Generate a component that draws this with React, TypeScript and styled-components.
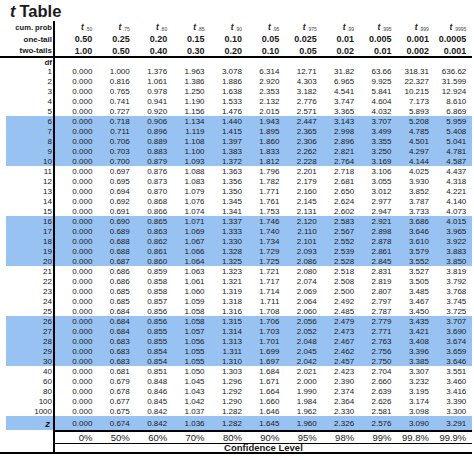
import React from 'react';
import styled, { createGlobalStyle } from 'styled-components';

const BLUE = '#98c2f2';
const INK = '#1a1a1a';

const GlobalStyle = createGlobalStyle`
  html, body { margin: 0; padding: 0; background: #fff; }
  body { font-family: 'Liberation Sans', Arial, sans-serif; color: ${INK}; }
`;

const Page = styled.div`
  width: 474px;
  height: 460px;
  overflow: hidden;
`;

const Title = styled.h1`
  margin: 0;
  height: 21px;
  padding-left: 10px;
  font-size: 16.5px;
  line-height: 22px;
  font-weight: 700;
  i { margin-right: 4px; }
`;

const Row = styled.div<{ $h: number; $band?: boolean; $rule?: number }>`
  display: grid;
  grid-template-columns: 55px repeat(10, 37.4px) 43px;
  width: 472px;
  height: ${(p) => p.$h}px;
  background: ${(p) => (p.$band ? `linear-gradient(to right, transparent 6px, ${BLUE} 6px)` : 'transparent')};
  border-bottom: ${(p) => (p.$rule ? `${p.$rule}px solid #000` : 'none')};
`;

const Label = styled.div<{ $size?: number; $bold?: boolean }>`
  display: flex;
  align-items: center;
  justify-content: flex-end;
  padding-right: 1px;
  border-right: 2px solid #000;
  font-size: ${(p) => p.$size ?? 8}px;
  font-weight: ${(p) => (p.$bold ? 700 : 400)};
  white-space: nowrap;
  i { font-weight: 700; font-size: 9.5px; margin-right: 2px; }
`;

const Cell = styled.div<{ $size?: number; $bold?: boolean; $top?: number; $bottom?: number }>`
  display: flex;
  align-items: center;
  justify-content: flex-end;
  box-sizing: border-box;
  font-size: ${(p) => p.$size ?? 8}px;
  font-weight: ${(p) => (p.$bold ? 700 : 400)};
  white-space: nowrap;
  border-top: ${(p) => (p.$top ? `${p.$top}px solid #000` : 'none')};
  border-bottom: ${(p) => (p.$bottom ? `${p.$bottom}px solid #000` : 'none')};
  &:last-child { padding-right: 5.6px; }
`;

const TMark = styled.span`
  font-weight: 700;
  font-style: italic;
  font-size: 8.5px;
  sub {
    font-size: 5px;
    font-style: normal;
    font-weight: 400;
    color: #444;
    margin-left: 1.5px;
    vertical-align: -1px;
  }
`;

const Spanning = styled.div`
  grid-column: 2 / -1;
  display: flex;
  align-items: center;
  justify-content: center;
  font-size: 9.5px;
  font-weight: 700;
`;

const subs = ['.50', '.75', '.80', '.85', '.90', '.95', '.975', '.99', '.995', '.999', '.9995'];
const oneTail = ['0.50', '0.25', '0.20', '0.15', '0.10', '0.05', '0.025', '0.01', '0.005', '0.001', '0.0005'];
const twoTails = ['1.00', '0.50', '0.40', '0.30', '0.20', '0.10', '0.05', '0.02', '0.01', '0.002', '0.001'];
const percents = ['0%', '50%', '60%', '70%', '80%', '90%', '95%', '98%', '99%', '99.8%', '99.9%'];

const rows: [string, string][] = [
  ['1', '0.000 1.000 1.376 1.963 3.078 6.314 12.71 31.82 63.66 318.31 636.62'],
  ['2', '0.000 0.816 1.061 1.386 1.886 2.920 4.303 6.965 9.925 22.327 31.599'],
  ['3', '0.000 0.765 0.978 1.250 1.638 2.353 3.182 4.541 5.841 10.215 12.924'],
  ['4', '0.000 0.741 0.941 1.190 1.533 2.132 2.776 3.747 4.604 7.173 8.610'],
  ['5', '0.000 0.727 0.920 1.156 1.476 2.015 2.571 3.365 4.032 5.893 6.869'],
  ['6', '0.000 0.718 0.906 1.134 1.440 1.943 2.447 3.143 3.707 5.208 5.959'],
  ['7', '0.000 0.711 0.896 1.119 1.415 1.895 2.365 2.998 3.499 4.785 5.408'],
  ['8', '0.000 0.706 0.889 1.108 1.397 1.860 2.306 2.896 3.355 4.501 5.041'],
  ['9', '0.000 0.703 0.883 1.100 1.383 1.833 2.262 2.821 3.250 4.297 4.781'],
  ['10', '0.000 0.700 0.879 1.093 1.372 1.812 2.228 2.764 3.169 4.144 4.587'],
  ['11', '0.000 0.697 0.876 1.088 1.363 1.796 2.201 2.718 3.106 4.025 4.437'],
  ['12', '0.000 0.695 0.873 1.083 1.356 1.782 2.179 2.681 3.055 3.930 4.318'],
  ['13', '0.000 0.694 0.870 1.079 1.350 1.771 2.160 2.650 3.012 3.852 4.221'],
  ['14', '0.000 0.692 0.868 1.076 1.345 1.761 2.145 2.624 2.977 3.787 4.140'],
  ['15', '0.000 0.691 0.866 1.074 1.341 1.753 2.131 2.602 2.947 3.733 4.073'],
  ['16', '0.000 0.690 0.865 1.071 1.337 1.746 2.120 2.583 2.921 3.686 4.015'],
  ['17', '0.000 0.689 0.863 1.069 1.333 1.740 2.110 2.567 2.898 3.646 3.965'],
  ['18', '0.000 0.688 0.862 1.067 1.330 1.734 2.101 2.552 2.878 3.610 3.922'],
  ['19', '0.000 0.688 0.861 1.066 1.328 1.729 2.093 2.539 2.861 3.579 3.883'],
  ['20', '0.000 0.687 0.860 1.064 1.325 1.725 2.086 2.528 2.845 3.552 3.850'],
  ['21', '0.000 0.686 0.859 1.063 1.323 1.721 2.080 2.518 2.831 3.527 3.819'],
  ['22', '0.000 0.686 0.858 1.061 1.321 1.717 2.074 2.508 2.819 3.505 3.792'],
  ['23', '0.000 0.685 0.858 1.060 1.319 1.714 2.069 2.500 2.807 3.485 3.768'],
  ['24', '0.000 0.685 0.857 1.059 1.318 1.711 2.064 2.492 2.797 3.467 3.745'],
  ['25', '0.000 0.684 0.856 1.058 1.316 1.708 2.060 2.485 2.787 3.450 3.725'],
  ['26', '0.000 0.684 0.856 1.058 1.315 1.706 2.056 2.479 2.779 3.435 3.707'],
  ['27', '0.000 0.684 0.855 1.057 1.314 1.703 2.052 2.473 2.771 3.421 3.690'],
  ['28', '0.000 0.683 0.855 1.056 1.313 1.701 2.048 2.467 2.763 3.408 3.674'],
  ['29', '0.000 0.683 0.854 1.055 1.311 1.699 2.045 2.462 2.756 3.396 3.659'],
  ['30', '0.000 0.683 0.854 1.055 1.310 1.697 2.042 2.457 2.750 3.385 3.646'],
  ['40', '0.000 0.681 0.851 1.050 1.303 1.684 2.021 2.423 2.704 3.307 3.551'],
  ['60', '0.000 0.679 0.848 1.045 1.296 1.671 2.000 2.390 2.660 3.232 3.460'],
  ['80', '0.000 0.678 0.846 1.043 1.292 1.664 1.990 2.374 2.639 3.195 3.416'],
  ['100', '0.000 0.677 0.845 1.042 1.290 1.660 1.984 2.364 2.626 3.174 3.390'],
  ['1000', '0.000 0.675 0.842 1.037 1.282 1.646 1.962 2.330 2.581 3.098 3.300'],
];
const zRow = '0.000 0.674 0.842 1.036 1.282 1.645 1.960 2.326 2.576 3.090 3.291';

// every second block of five df rows is shaded
const banded = (df: string) => {
  const n = Number(df);
  return n <= 30 && Math.floor((n - 1) / 5) % 2 === 1;
};

export default function App() {
  return (
    <Page>
      <GlobalStyle />
      <Title>
        <i>t</i>Table
      </Title>

      <Row $h={12}>
        <Label $size={7.6} $bold>cum. prob</Label>
        {subs.map((s) => (
          <Cell key={s}>
            <TMark>
              t<sub>{s}</sub>
            </TMark>
          </Cell>
        ))}
      </Row>
      <Row $h={12}>
        <Label $bold>one-tail</Label>
        {oneTail.map((v, i) => (
          <Cell key={i} $size={9} $bold>{v}</Cell>
        ))}
      </Row>
      <Row $h={11} $rule={2}>
        <Label $bold>two-tails</Label>
        {twoTails.map((v, i) => (
          <Cell key={i} $size={9} $bold>{v}</Cell>
        ))}
      </Row>
      <Row $h={8}>
        <Label $bold>df</Label>
      </Row>

      {rows.map(([df, vals]) => (
        <Row key={df} $h={10} $band={banded(df)}>
          <Label>{df}</Label>
          {vals.split(' ').map((v, i) => (
            <Cell key={i}>{v}</Cell>
          ))}
        </Row>
      ))}

      <Row $h={14} $band>
        <Label>
          <i>z</i>
        </Label>
        {zRow.split(' ').map((v, i) => (
          <Cell key={i}>{v}</Cell>
        ))}
      </Row>
      <Row $h={12}>
        <Label />
        {percents.map((v) => (
          <Cell key={v} $size={9.5} $top={2} $bottom={1}>{v}</Cell>
        ))}
      </Row>
      <Row $h={10} $rule={2}>
        <Label />
        <Spanning>Confidence Level</Spanning>
      </Row>
    </Page>
  );
}
